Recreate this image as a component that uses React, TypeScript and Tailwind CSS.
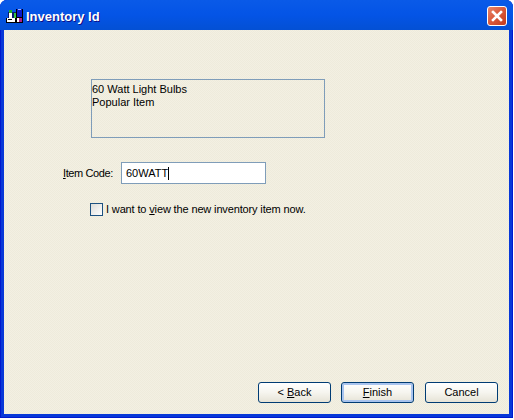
function TitleIcon() {
  return (
    <svg width="17" height="14" viewBox="0 0 17 14" className="shrink-0" shapeRendering="crispEdges">
      {/* bottle, green cap */}
      <rect x="2" y="3" width="5" height="6" fill="#0a1a70" />
      <rect x="3" y="4" width="3" height="5" fill="#fff" />
      <rect x="3" y="1" width="3" height="3" fill="#1fae2a" />
      {/* green carton */}
      <rect x="7" y="3" width="4" height="6" fill="#0a1a70" />
      <rect x="8" y="4" width="2" height="5" fill="#35c23e" />
      {/* tall blue box */}
      <rect x="10" y="0" width="7" height="9" fill="#000" />
      <rect x="11" y="0" width="5" height="8" fill="#0a18c8" />
      <rect x="12" y="0" width="3" height="1" fill="#9fb8ff" />
      {/* bottom boxes */}
      <rect x="0" y="9" width="10" height="5" fill="#000" />
      <rect x="1" y="9" width="8" height="4" fill="#fff" />
      <rect x="2" y="10" width="4" height="1" fill="#000" />
      <rect x="10" y="8" width="7" height="6" fill="#000" />
      <rect x="11" y="9" width="2" height="4" fill="#fff" />
      <rect x="13" y="9" width="3" height="4" fill="#b0208a" />
    </svg>
  );
}

function XpButton({ label, mnemonic, rest, pre, isDefault }: { label?: string; mnemonic?: string; rest?: string; pre?: string; isDefault?: boolean }) {
  return (
    <button
      className={
        "w-[73px] h-[21px] rounded-[3px] border border-[#003c74] bg-gradient-to-b from-white via-[#f6f5ef] to-[#e6e3d6] text-[11px] leading-none text-black " +
        (isDefault ? "shadow-[inset_0_0_0_2px_#a9c4ee]" : "")
      }
    >
      <span className="whitespace-pre">
        {label}
        {pre}
        {mnemonic && <span className="underline">{mnemonic}</span>}
        {rest}
      </span>
    </button>
  );
}

export default function App() {
  return (
    <div className="w-[513px] h-[418px] rounded-t-[7px] overflow-hidden flex flex-col bg-[#0838d8] shadow-[inset_0_0_0_1px_#0019cf] text-black font-['Liberation_Sans',Arial,sans-serif]">
      {/* title bar */}
      <div className="h-[30px] shrink-0 flex items-center pt-[2px] pl-[6px] pr-[6px] bg-gradient-to-b from-[#0a5ae8] via-[#0454e6] to-[#0350d4]">
        <TitleIcon />
        <span className="ml-[3px] pt-[2px] text-[13px] font-bold text-white [text-shadow:1px_1px_0_#0f1089]">Inventory Id</span>
        <div className="ml-auto w-[20px] h-[20px] rounded-[3px] border border-white bg-gradient-to-br from-[#e8866a] via-[#d9583a] to-[#c23a1c] flex items-center justify-center">
          <svg width="14" height="14" viewBox="0 0 14 14">
            <path d="M3 3 L11 11 M11 3 L3 11" stroke="#fff" strokeWidth="2.6" strokeLinecap="square" />
          </svg>
        </div>
      </div>

      {/* client area */}
      <div className="flex-1 mx-[4px] mb-[4px] bg-[conic-gradient(#f3f0e3_25%,#eeebdb_0_50%,#f3f0e3_0_75%,#eeebdb_0)] bg-[length:2px_2px] flex flex-col text-[11px] leading-[13px]">
        <div className="ml-[87px] mt-[49px] w-[234px] h-[59px] border border-[#7f9db9] pt-[3px]">
          <div>60 Watt Light Bulbs</div>
          <div>Popular Item</div>
        </div>

        <div className="flex items-center mt-[24px] ml-[59px]">
          <span className="w-[58px] tracking-[-0.4px]">
            <span className="underline">I</span>tem Code:
          </span>
          <div className="w-[145px] h-[22px] border border-[#7f9db9] bg-white flex items-center pl-[4px]">
            60WATT<span className="w-px h-[13px] bg-black" />
          </div>
        </div>

        <div className="flex items-center mt-[18px] ml-[86px]">
          <span className="w-[13px] h-[13px] border border-[#1c5180] bg-gradient-to-br from-[#dcdcd7] to-white" />
          <span className="ml-[3px] pt-[1px] tracking-[-0.14px]">
            I want to <span className="underline">v</span>iew the new inventory item now.
          </span>
        </div>

        <div className="mt-auto mb-[11px] ml-[254px] flex">
          <XpButton pre="< " mnemonic="B" rest="ack" />
          <div className="ml-[10px]">
            <XpButton mnemonic="F" rest="inish" isDefault />
          </div>
          <div className="ml-[11px]">
            <XpButton label="Cancel" />
          </div>
        </div>
      </div>
    </div>
  );
}
